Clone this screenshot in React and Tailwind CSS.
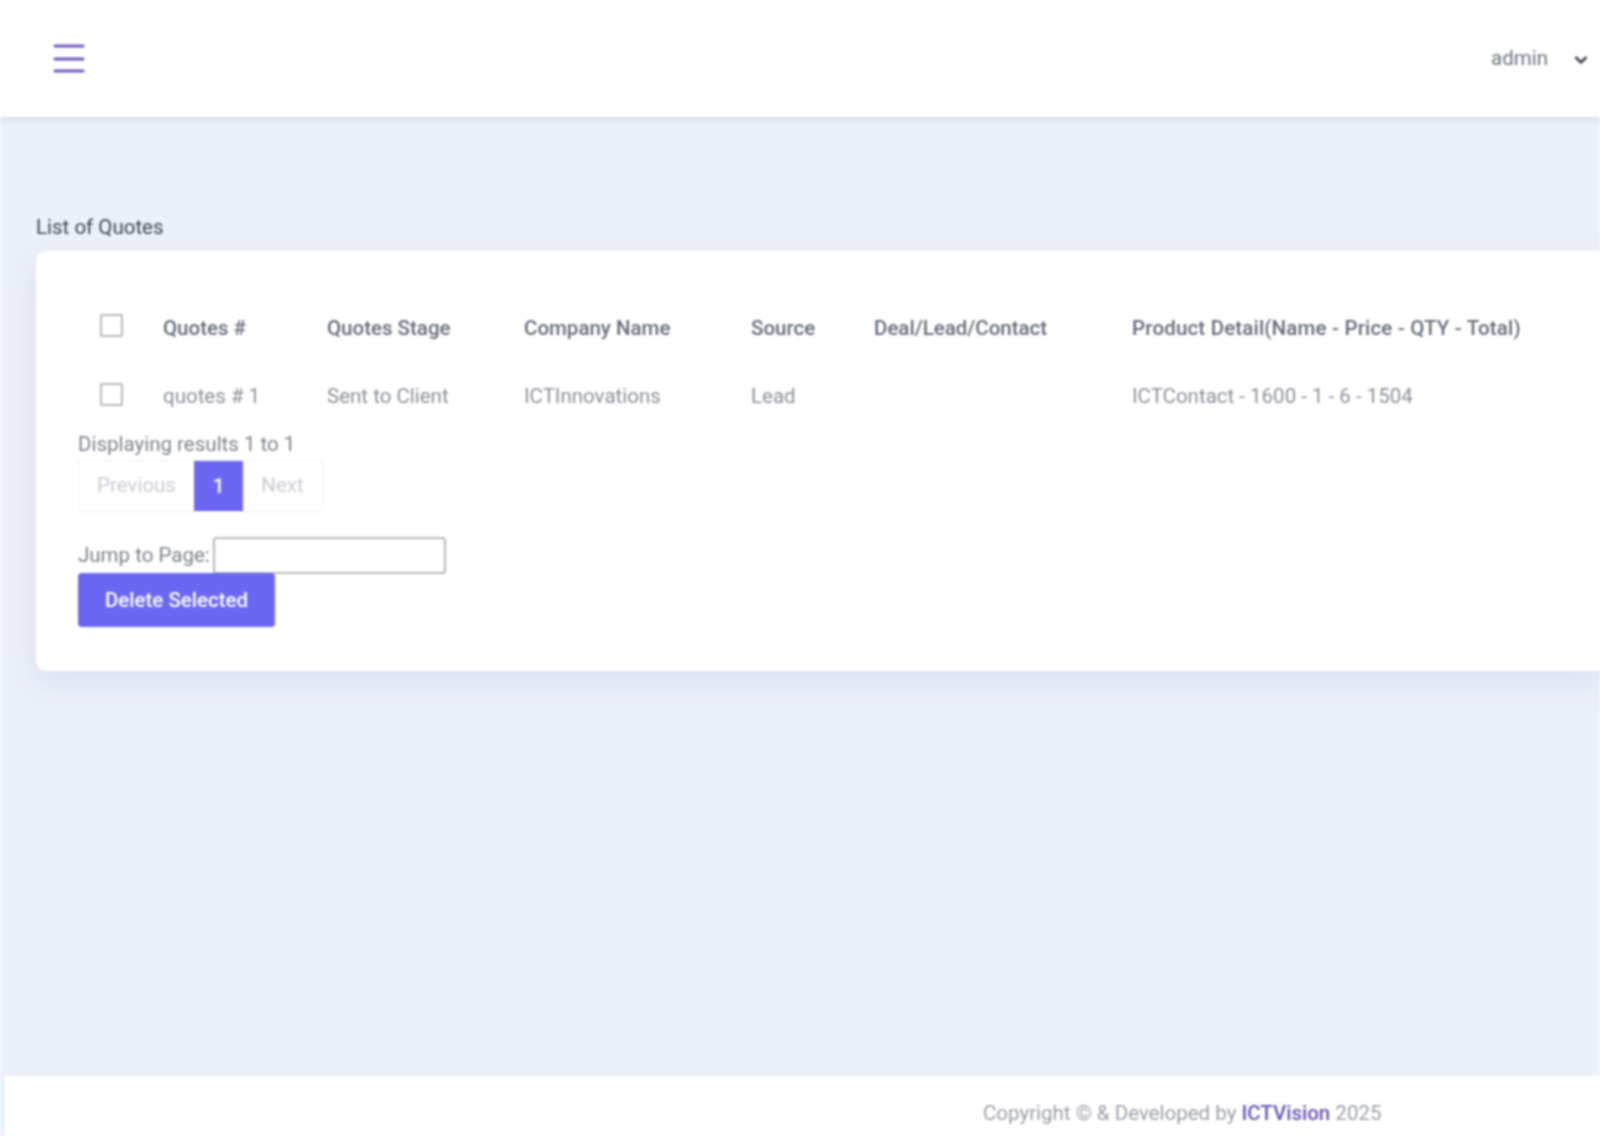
import React from "react";

const heads = ["Quotes #", "Quotes Stage", "Company Name", "Source", "Deal/Lead/Contact"];
const cells = ["quotes # 1", "Sent to Client", "ICTInnovations", "Lead", "", "ICTContact - 1600 - 1 - 6 - 1504"];
const cols = "grid grid-cols-[85px_164px_197px_227px_123px_258px_1fr] items-center";

function Box() {
  return <span className="block w-[23px] h-[23px] ml-[22px] -mt-[5px] border-2 border-[#b9b9bd] rounded-[2px] bg-white" />;
}

export default function App() {
  return (
    <div className="min-h-[1136px] h-[1136px] overflow-hidden flex flex-col bg-[#ecf0f8] font-['Roboto',sans-serif] text-[20.5px] text-[#6c757d] blur-[1px]">
      <header className="h-[117px] shrink-0 bg-white shadow-[0_2px_6px_rgba(80,90,120,0.18)] flex items-center justify-between pl-[53px] pr-[12px]">
        <svg width="32" height="30" viewBox="0 0 32 30" className="text-[#7158c2]" fill="none" stroke="currentColor" strokeWidth="3" strokeLinecap="round">
          <path d="M2 2H30M2 15H30M2 27H30" />
        </svg>
        <div className="flex items-center gap-[26px] text-[#6b7280]">
          <span>admin</span>
          <svg width="14" height="10" viewBox="0 0 14 10" fill="none" stroke="#3f4650" strokeWidth="2.6" className="mt-[2px]"><path d="M1.5 2L7 7.5L12.5 2" /></svg>
        </div>
      </header>

      <main className="flex-1 pt-[98px] pl-[36px]">
        <h4 className="text-[20.5px] leading-[24px] text-[#3f4650] font-normal mb-[12px]">List of Quotes</h4>
        <section className="bg-white rounded-l-[10px] shadow-[0_12px_30px_rgba(110,100,220,0.12)] h-[420px] pl-[42px] pt-[44px]">
          <div className={`${cols} h-[66px] font-medium text-[#656d7a]`}>
            <div><Box /></div>
            {heads.map((h) => <div key={h} className="whitespace-nowrap">{h}</div>)}
            <div className="whitespace-nowrap tracking-[0.17px]">Product Detail(Name - Price - QTY - Total)</div>
          </div>
          <div className={`${cols} h-[71px] text-[#8a9099]`}>
            <div><Box /></div>
            {cells.map((c, i) => <div key={i} className="whitespace-nowrap">{c}</div>)}
          </div>
          <div className="leading-[24px] text-[#7d838c]">Displaying results 1 to 1</div>
          <nav className="flex w-fit h-[52px] mt-[4px] border border-[#f0f0f4] rounded-[4px] items-stretch">
            <span className="w-[115px] flex items-center justify-center text-[#c9ccd2] -mt-[1px]">Previous</span>
            <span className="w-[49px] flex items-center justify-center bg-[#6c67f3] text-white font-medium">1</span>
            <span className="w-[79px] flex items-center justify-center text-[#c9ccd2] -mt-[1px]">Next</span>
          </nav>
          <div className="flex items-center h-[37px] mt-[25px] text-[#7d838c]">
            <label>Jump to Page:</label>
            <input className="ml-[3px] w-[233px] h-[37px] border-2 border-[#b9b9bd] rounded-[4px] bg-white" />
          </div>
          <button className="block w-[197px] h-[54px] -mt-px rounded-[4px] bg-[#6c67f3] text-white font-medium relative">Delete Selected</button>
        </section>
      </main>

      <footer className="h-[60px] shrink-0 ml-[5px] bg-white flex items-center pl-[978px] pt-[14px] text-[#9a9fa8]">
        <span className="whitespace-nowrap">Copyright © &amp; Developed by <span className="text-[#6a55b8] font-medium">ICTVision</span> 2025</span>
      </footer>
    </div>
  );
}
